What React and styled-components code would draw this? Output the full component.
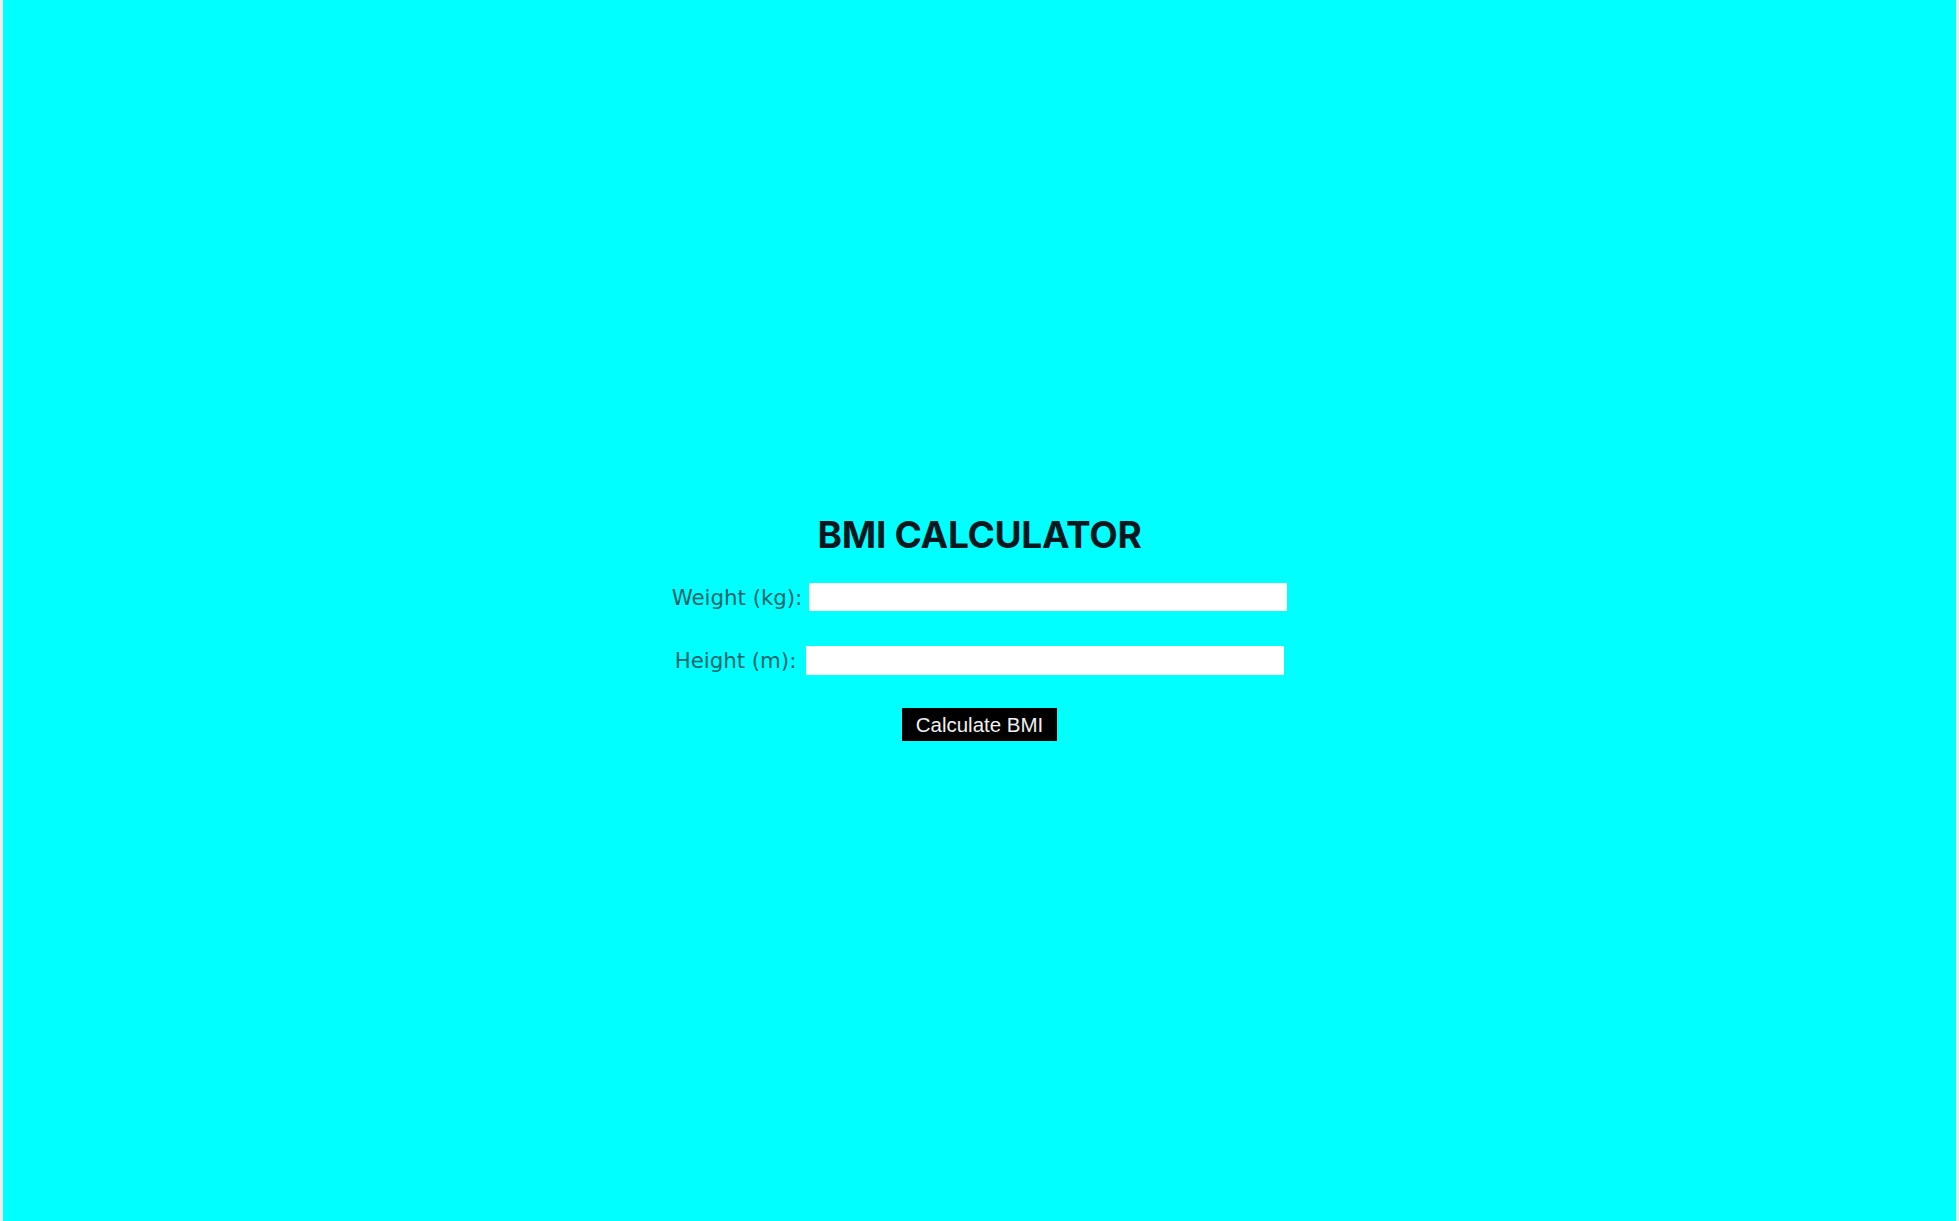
import React, { useState } from 'react';
import styled, { createGlobalStyle } from 'styled-components';

const GlobalStyle = createGlobalStyle`
  html, body {
    margin: 0;
    padding: 0;
    background: #ececec;
  }
  * {
    box-sizing: border-box;
  }
`;

const Page = styled.div`
  margin: 0 3px;
  height: 100vh;
  background: #00ffff;
  display: flex;
  flex-direction: column;
  align-items: center;
  justify-content: center;
  padding-top: 32px;
  font-family: "Liberation Sans", Arial, sans-serif;
`;

const Title = styled.h1`
  margin: 0 0 26px;
  font-family: Inter, "Liberation Sans", sans-serif;
  font-size: 37px;
  font-weight: 700;
  line-height: 45px;
  letter-spacing: -0.3px;
  color: #071820;
`;

const Row = styled.div`
  display: flex;
  align-items: center;
  justify-content: center;
  gap: ${(p) => p.$space}px;
  margin-bottom: ${(p) => p.$gap}px;
`;

const Label = styled.label`
  font-family: "DejaVu Sans", Verdana, sans-serif;
  font-size: 21.3px;
  color: #116469;
`;

const Input = styled.input`
  width: 478px;
  height: ${(p) => p.$h}px;
  border: none;
  background: #ffffff;
  outline: none;
  font-size: 16px;
  padding: 0 6px;
`;

const Button = styled.button`
  background: #000;
  color: #f0f0f0;
  border: none;
  font-family: "Liberation Sans", Arial, sans-serif;
  font-size: 20.5px;
  height: 33px;
  padding: 0 14px;
  cursor: pointer;
`;

export default function App() {
  const [weight, setWeight] = useState('');
  const [height, setHeight] = useState('');

  return (
    <>
      <GlobalStyle />
      <Page>
        <Title>BMI CALCULATOR</Title>
        <Row $gap={35} $space={7}>
          <Label>Weight (kg):</Label>
          <Input $h={28} value={weight} onChange={(e) => setWeight(e.target.value)} />
        </Row>
        <Row $gap={33} $space={10}>
          <Label>Height (m):</Label>
          <Input $h={29} value={height} onChange={(e) => setHeight(e.target.value)} />
        </Row>
        <Button>Calculate BMI</Button>
      </Page>
    </>
  );
}
